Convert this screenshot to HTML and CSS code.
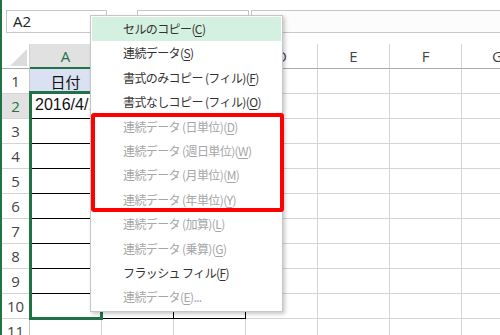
FILE: index.html
```html
<!DOCTYPE html>
<html lang="ja">

<head>
    <meta charset="UTF-8">
    <title>Excel - フィル</title>
    <link rel="stylesheet" href="styles.css">
</head>

<body>
    <div class="app">
        <div class="bar">
            <div class="namebox">A2</div>
            <div class="fnbox"></div>
            <div class="formula"></div>
        </div>

        <div class="sheet">
            <!-- header row -->
            <div class="c hd corner">
                <svg width="17" height="17" viewBox="0 0 17 17"><polygon points="17,0 17,17 0,17" fill="#dcdcdc" /></svg>
            </div>
            <div class="c hd cur">A</div>
            <div class="c hd">B</div>
            <div class="c hd">C</div>
            <div class="c hd">D</div>
            <div class="c hd">E</div>
            <div class="c hd">F</div>
            <div class="c hd">G</div>

            <div class="c rh">1</div>
            <div class="c tb title">日付</div>
            <div class="c tb"></div>
            <div class="c tb"></div>
            <div class="c"></div><div class="c"></div><div class="c"></div><div class="c"></div>

            <div class="c rh cur">2</div>
            <div class="c tb val">2016/4/1</div>
            <div class="c tb"></div>
            <div class="c tb"></div>
            <div class="c"></div><div class="c"></div><div class="c"></div><div class="c"></div>

            <div class="c rh">3</div>
            <div class="c tb"></div><div class="c tb"></div><div class="c tb"></div>
            <div class="c"></div><div class="c"></div><div class="c"></div><div class="c"></div>

            <div class="c rh">4</div>
            <div class="c tb"></div><div class="c tb"></div><div class="c tb"></div>
            <div class="c"></div><div class="c"></div><div class="c"></div><div class="c"></div>

            <div class="c rh">5</div>
            <div class="c tb"></div><div class="c tb"></div><div class="c tb"></div>
            <div class="c"></div><div class="c"></div><div class="c"></div><div class="c"></div>

            <div class="c rh">6</div>
            <div class="c tb"></div><div class="c tb"></div><div class="c tb"></div>
            <div class="c"></div><div class="c"></div><div class="c"></div><div class="c"></div>

            <div class="c rh">7</div>
            <div class="c tb"></div><div class="c tb"></div><div class="c tb"></div>
            <div class="c"></div><div class="c"></div><div class="c"></div><div class="c"></div>

            <div class="c rh">8</div>
            <div class="c tb"></div><div class="c tb"></div><div class="c tb"></div>
            <div class="c"></div><div class="c"></div><div class="c"></div><div class="c"></div>

            <div class="c rh">9</div>
            <div class="c tb"></div><div class="c tb"></div><div class="c tb"></div>
            <div class="c"></div><div class="c"></div><div class="c"></div><div class="c"></div>

            <div class="c rh">10</div>
            <div class="c tb"></div><div class="c tb"></div><div class="c tb"></div>
            <div class="c"></div><div class="c"></div><div class="c"></div><div class="c"></div>

            <div class="c rh">11</div>
            <div class="c"></div><div class="c"></div><div class="c"></div>
            <div class="c"></div><div class="c"></div><div class="c"></div><div class="c"></div>
        </div>

        <!-- fill range outline A2:A10 -->
        <div class="range"></div>

        <!-- right-drag fill menu -->
        <ul class="menu">
            <li class="item on">セルのコピー(<u>C</u>)</li>
            <li class="item">連続データ(<u>S</u>)</li>
            <li class="item">書式のみコピー (フィル)(<u>F</u>)</li>
            <li class="item">書式なしコピー (フィル)(<u>O</u>)</li>
            <li class="item off">連続データ (日単位)(<u>D</u>)</li>
            <li class="item off">連続データ (週日単位)(<u>W</u>)</li>
            <li class="item off">連続データ (月単位)(<u>M</u>)</li>
            <li class="item off">連続データ (年単位)(<u>Y</u>)</li>
            <li class="item off">連続データ (加算)(<u>L</u>)</li>
            <li class="item off">連続データ (乗算)(<u>G</u>)</li>
            <li class="item">フラッシュ フィル(<u>F</u>)</li>
            <li class="item off">連続データ(<u>E</u>)...</li>
        </ul>

        <div class="mark"></div>
    </div>
</body>

</html>
```

FILE: styles.css
```css
* {
    box-sizing: border-box;
}

body {
    margin: 0;
    background: #fff;
    font-family: "Open Sans", "Noto Sans CJK JP", sans-serif;
}

.app {
    position: relative;
    width: 500px;
    height: 335px;
    overflow: hidden;
    border-left: 2px solid #217346;
}

/* name box / formula bar */
.bar {
    display: flex;
    align-items: flex-start;
    height: 44px;
    padding: 10px 0 0 4px;
}

.namebox {
    width: 101px;
    height: 23px;
    border: 1px solid #c6c6c6;
    padding-left: 6px;
    font-size: 15px;
    line-height: 21px;
    color: #222;
}

.fnbox {
    width: 112px;
    height: 23px;
    margin-left: 30px;
    border: 1px solid #c6c6c6;
}

.formula {
    flex: 1;
    height: 23px;
    margin-left: 2px;
    border: 1px solid #c6c6c6;
    border-right: none;
    background: #fcfcfc;
}

/* grid */
.sheet {
    display: grid;
    grid-template-columns: 28px repeat(7, 72px);
    grid-auto-rows: 25px;
}

.c {
    border-right: 1px solid #d4d4d4;
    border-bottom: 1px solid #d4d4d4;
}

.hd {
    display: flex;
    align-items: center;
    justify-content: center;
    font-size: 15px;
    color: #444;
    border-bottom-color: #ababab;
}

.corner {
    align-items: flex-end;
    justify-content: flex-end;
    padding: 0 2px 2px 0;
}

.corner svg {
    display: block;
}

.hd.cur {
    background: #e1e1e1;
    color: #217346;
    border-bottom: 2px solid #217346;
}

.rh {
    display: flex;
    align-items: center;
    justify-content: center;
    font-size: 15px;
    color: #444;
    border-right-color: #c6c6c6;
}

.rh.cur {
    background: #e1e1e1;
    color: #217346;
}

.tb {
    border-right-color: #000;
    border-bottom-color: #000;
}

.title {
    display: flex;
    align-items: center;
    justify-content: center;
    background: #d9e1f2;
    font-family: "Noto Sans CJK JP", sans-serif;
    font-size: 15px;
    color: #111;
}

.val {
    display: flex;
    align-items: center;
    padding: 0 0 2px 5px;
    font-family: "Liberation Sans", sans-serif;
    font-size: 16px;
    color: #111;
    white-space: nowrap;
    overflow: hidden;
}

.range {
    position: absolute;
    left: 27px;
    top: 91px;
    width: 74px;
    height: 229px;
    border: 3px solid #217346;
}

/* context menu */
.menu {
    position: absolute;
    left: 88px;
    top: 15px;
    width: 193px;
    margin: 0;
    padding: 1px;
    list-style: none;
    background: #fff;
    border: 1px solid #c6c6c6;
    box-shadow: 2px 2px 4px rgba(0, 0, 0, 0.22);
    font-family: "Noto Sans CJK JP", sans-serif;
    font-size: 12px;
    letter-spacing: -0.6px;
    color: #333;
}

.item {
    height: 24.4px;
    padding-left: 31px;
    line-height: 24px;
    white-space: nowrap;
}

.item u {
    text-underline-offset: 2px;
}

.item.on {
    background: #d3f0e0;
}

.item.off {
    color: #a6a6a6;
}

.mark {
    position: absolute;
    left: 89px;
    top: 113px;
    width: 193px;
    height: 99px;
    border: 4px solid #ff0000;
    border-radius: 3px;
}
```
